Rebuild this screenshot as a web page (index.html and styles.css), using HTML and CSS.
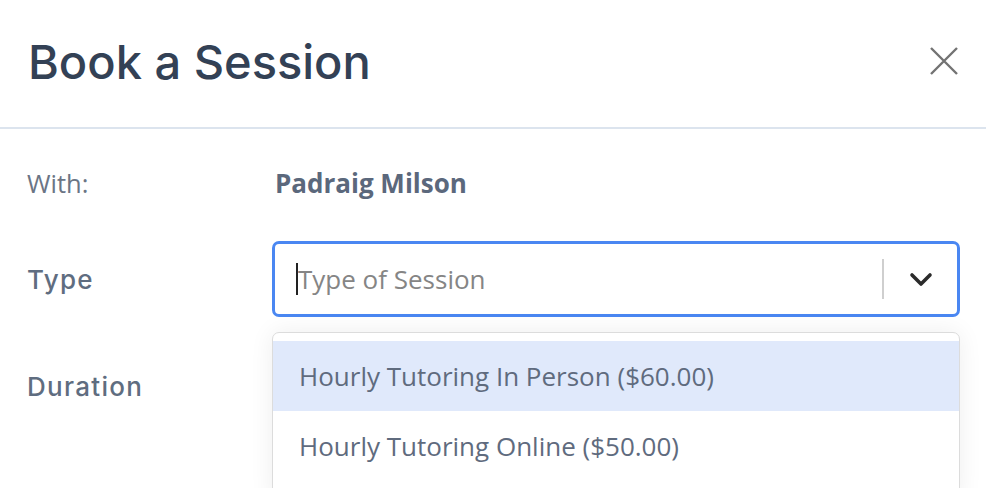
FILE: index.html
```html
<!DOCTYPE html>
<html lang="en">
<head>
    <meta charset="UTF-8">
    <meta name="viewport" content="width=device-width, initial-scale=1.0">
    <title>Book a Session</title>
    <link rel="stylesheet" href="styles.css">
</head>
<body>
    <div class="modal">
        <div class="modal-header">
            <h1 class="modal-title">Book a Session</h1>
            <button class="close-btn" aria-label="Close">
                <svg width="28" height="28" viewBox="0 0 28 28">
                    <path d="M1 1 L27 27 M27 1 L1 27" stroke="#737373" stroke-width="2.4" fill="none"/>
                </svg>
            </button>
        </div>

        <div class="modal-body">
            <div class="row row-with">
                <div class="label label-plain">With:</div>
                <div class="value">Padraig Milson</div>
            </div>

            <div class="row row-type">
                <div class="label">Type</div>
                <div class="select-wrap">
                    <div class="select">
                        <span class="caret"></span>
                        <span class="placeholder">Type of Session</span>
                        <span class="sep"></span>
                        <span class="chevron">
                            <svg width="24" height="16" viewBox="0 0 24 16">
                                <path d="M3 3 L12 12 L21 3" stroke="#2b2b2b" stroke-width="3.6" fill="none" stroke-linecap="round" stroke-linejoin="round"/>
                            </svg>
                        </span>
                    </div>
                    <ul class="menu">
                        <li class="option active">Hourly Tutoring In Person ($60.00)</li>
                        <li class="option">Hourly Tutoring Online ($50.00)</li>
                    </ul>
                </div>
            </div>

            <div class="row row-duration">
                <div class="label">Duration</div>
            </div>
        </div>
    </div>
</body>
</html>
```

FILE: styles.css
```css
/* booking modal */
body {
    margin: 0;
    background-color: #fff;
    font-family: "Open Sans", "Liberation Sans", sans-serif;
    overflow: hidden;
}
.modal {
    width: 986px;
    height: 488px;
}
.modal-header {
    height: 127px;
    display: flex;
    align-items: center;
    justify-content: space-between;
    padding: 0 28px 0 28px;
    border-bottom: 2px solid #dce4ee;
}
.modal-title {
    margin: 0;
    font-family: Inter, "Noto Sans", sans-serif;
    font-weight: 500;
    font-size: 47px;
    color: #334155;
    padding-bottom: 4px;
}
.close-btn {
    background: none;
    border: none;
    padding: 0;
    width: 28px;
    height: 28px;
    margin-top: -6px;
    cursor: pointer;
}
.modal-body {
    padding: 0 26px 0 27px;
}
.row {
    display: flex;
    align-items: center;
}
.row-with {
    height: 108px;
}
.row-type {
    height: 84px;
}
.row-duration {
    height: 130px;
}
.label {
    width: 245px;
    font-family: Inter, "Noto Sans", sans-serif;
    font-weight: 500;
    font-size: 26px;
    letter-spacing: 1.3px;
    color: #5f6d80;
}
.label-plain {
    font-family: "Open Sans", sans-serif;
    font-weight: 400;
    font-size: 25.5px;
    letter-spacing: 0;
    color: #6b7585;
}
.value {
    font-weight: 700;
    font-size: 26px;
    color: #5b687c;
    padding-left: 3px;
}
.select-wrap {
    position: relative;
    flex: 1;
}
.select {
    height: 70px;
    border: 3px solid #4a87f2;
    border-radius: 7px;
    display: flex;
    align-items: center;
    padding-left: 21px;
}
.caret {
    width: 2px;
    height: 32px;
    background-color: #222;
}
.placeholder {
    flex: 1;
    font-size: 26px;
    color: #858585;
}
.sep {
    width: 2px;
    height: 40px;
    background-color: #cfcfcf;
}
.chevron {
    width: 73px;
    display: flex;
    justify-content: center;
    padding-top: 2px;
}
.menu {
    position: absolute;
    top: 91px;
    left: 0;
    right: 0;
    margin: 0;
    padding: 8px 0 0 0;
    list-style: none;
    background-color: #fff;
    border: 1px solid #dcdcdc;
    border-radius: 7px;
    box-shadow: 0 0 24px rgba(0, 0, 0, 0.07);
    height: 160px;
}
.option {
    height: 70px;
    display: flex;
    align-items: center;
    padding-left: 26px;
    font-size: 26px;
    color: #5f6b7e;
}
.option.active {
    background-color: #e0e9fb;
}
```
